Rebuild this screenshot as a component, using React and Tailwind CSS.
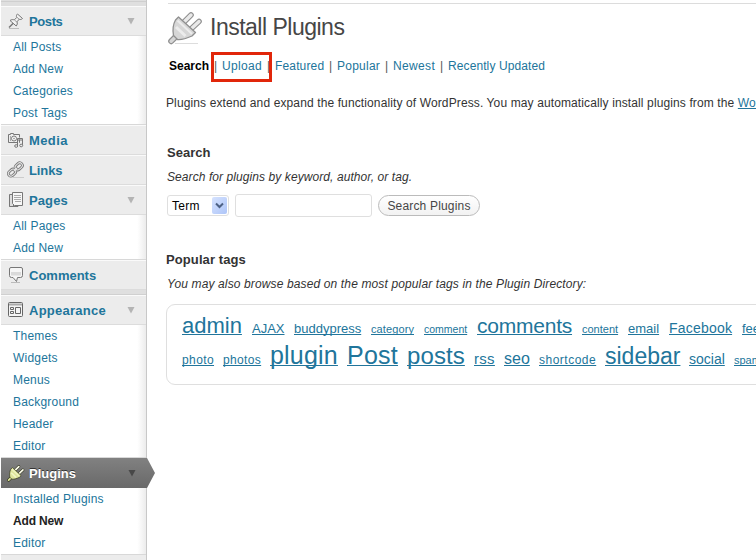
import React from 'react';

const stroke = { fill: 'none', stroke: '#777', strokeWidth: 1 };

function PinIcon() {
  return (
    <svg width="18" height="18" viewBox="0 0 18 18" {...stroke}>
      <path d="M2 16.500h10" stroke="#bdbdbd" />
      <path d="M2 15.500L6.500 11" stroke="#777" strokeWidth="1.400" />
      <path d="M3 8.500c1.500-1 3-1.100 4.300-.6L9.700 5.500c-.6-1.300-.2-2.700.8-3.500l5 4.500c-1 1.100-2.200 1.200-3.300.7L10 9.800c.6 1.400.3 3-.8 4.200z" fill="#f2f2f2" />
      <path d="M7.500 8l2.500 2.200M10 5.300l2.300 2" stroke="#999" />
    </svg>
  );
}

function MediaIcon() {
  return (
    <svg width="18" height="18" viewBox="0 0 18 18" {...stroke}>
      <path d="M1.500 3.500h2v-1h3v1h6v8h-11z" fill="#eee" />
      <circle cx="7" cy="7.500" r="2.500" fill="#fff" />
      <circle cx="7" cy="7.500" r=".6" stroke="#999" />
      <path d="M3.500 5v5" stroke="#aaa" />
      <path d="M11 15V7.500h4.500v7" stroke="#ececec" strokeWidth="2" />
      <path d="M10.500 15V7.500h5v7M10.500 9h5" />
      <ellipse cx="9.200" cy="15" rx="1.500" ry="1.300" fill="#eee" />
      <ellipse cx="14.200" cy="14.500" rx="1.500" ry="1.300" fill="#eee" />
    </svg>
  );
}

function LinkIcon() {
  return (
    <svg width="18" height="18" viewBox="0 0 18 18" fill="none">
      <path d="M6 16.500h11" stroke="#ccc" />
      <g transform="rotate(-43 8.500 8.500)" stroke="#777" strokeWidth="2.800">
        <rect x="-.2" y="5.800" width="8" height="5.200" rx="2.600" />
        <rect x="9" y="5.800" width="8" height="5.200" rx="2.600" />
        <path d="M5.500 8.500h6" />
      </g>
      <g transform="rotate(-43 8.500 8.500)" stroke="#e6e6e6" strokeWidth="1">
        <rect x="-.2" y="5.800" width="8" height="5.200" rx="2.600" />
        <rect x="9" y="5.800" width="8" height="5.200" rx="2.600" />
        <path d="M5.500 8.500h6" />
      </g>
    </svg>
  );
}

function PagesIcon() {
  return (
    <svg width="18" height="18" viewBox="0 0 18 18" {...stroke}>
      <path d="M2.500 3.500h4v12h-4z" fill="#ddd" />
      <path d="M2.500 15.500h8.500V14" />
      <path d="M5.500 1.500h10v13h-8l-2-2z" fill="#f7f7f7" />
      <path d="M7 4.500h7M7 6.500h7M7 8.500h7M8 10.500h6" stroke="#aaa" />
    </svg>
  );
}

function CommentIcon() {
  return (
    <svg width="18" height="18" viewBox="0 0 18 18" {...stroke}>
      <path d="M4 16.500h9" stroke="#bbb" />
      <path d="M4 1.500h10q1.500 0 1.500 1.500v6.500q0 2-2 2H10.500L9.500 15.500 6 11.500H4.500q-2 0-2-2V3q0-1.500 1.500-1.500z" fill="#f6f6f6" />
      <path d="M4 6h10v3.500H4z" fill="#dadada" stroke="none" />
    </svg>
  );
}

function AppearanceIcon() {
  return (
    <svg width="18" height="18" viewBox="0 0 18 18" {...stroke} stroke="#666">
      <rect x="1.500" y="1.500" width="14" height="14" rx="1" fill="#f4f4f4" />
      <path d="M2 3.500h13" strokeWidth="2" stroke="#aaa" />
      <path d="M3.500 6.500h3v2h-3zM3.500 10.500h3v2h-3zM8.500 6.500h5v6h-5z" />
    </svg>
  );
}

function PlugShape({ body, edge, prong, shade }) {
  return (
    <g>
      <path d="M3.200 31.200L8.500 26" stroke={edge} strokeWidth="6" strokeLinecap="round" />
      <path d="M3.200 31.200L8.500 26" stroke={body} strokeWidth="3.600" strokeLinecap="round" />
      <path d="M16 12L23 5M23.500 18.500L31 11.500" stroke={edge} strokeWidth="5.600" strokeLinecap="round" />
      <path d="M16 12L23 5M23.500 18.500L31 11.500" stroke={prong} strokeWidth="3.400" strokeLinecap="round" />
      <path d="M10.500 7L27.500 22.500 24 26C19.500 28 15 30 9.500 29.500L5.500 25.500C4.500 20 5 14.500 7.500 10z" fill={body} stroke={edge} strokeWidth="1.300" strokeLinejoin="round" />
      <path d="M9.500 10.500L24 24" stroke={shade} strokeWidth="2" />
      <path d="M8 17l9.500 9" stroke={shade} strokeWidth="3" />
    </g>
  );
}

function PluginMenuIcon() {
  return (
    <svg width="18" height="18" viewBox="0 0 35 35" fill="none">
      <PlugShape body="#dfe69c" edge="#33361f" prong="#fdfdec" shade="#f3f6c6" />
    </svg>
  );
}

function PluginTitleIcon() {
  return (
    <svg className="shrink-0" width="36" height="36" viewBox="0 0 36 36" fill="none">
      <path d="M7 33.500h23" stroke="#ddd" />
      <PlugShape body="#d6d6d6" edge="#8f8f8f" prong="#e9e9e9" shade="#ececec" />
    </svg>
  );
}

function Head({ icon, label, track = '', arrow }) {
  return (
    <div className="flex h-[30px] items-center border-t border-b border-t-[#fafafa] border-b-[#dcdcdc] bg-[#ececec] pl-[6px] pr-[11px]">
      {icon}
      <span className={`ml-1 flex-1 pt-[2px] text-[13px] font-bold text-[#21759b] ${track}`}>{label}</span>
      {arrow && <Arrow className="text-[#b4b4b4]" />}
    </div>
  );
}

function Arrow({ className }) {
  return (
    <svg className={className} width="8" height="8" viewBox="0 0 8 8">
      <path d="M.5 1h7L4 7.500z" fill="currentColor" />
    </svg>
  );
}

function Sub({ items, current }) {
  return (
    <ul className="bg-linear-to-r from-white from-[94%] to-[#ececec] pl-3 text-[12px] tracking-[0.2px] text-[#21759b]">
      {items.map((item) => (
        <li
          key={item}
          className={item === current ? 'h-[22px] leading-[22px] font-bold tracking-[-0.15px] text-[#222]' : 'h-[22px] leading-[22px]'}
        >
          {item}
        </li>
      ))}
    </ul>
  );
}

function Divider() {
  return <div className="h-[5px] border-b border-[#d0d0d0] bg-[#dfdfdf]" />;
}

function Rule() {
  return <div className="h-px bg-[#d8d8d8]" />;
}

function Sidebar() {
  return (
    <nav className="ml-px w-[146px] shrink-0 border-r border-[#c8c8c8]">
      <div className="h-[6px] bg-[#dfdfdf]">
        <div className="h-[2px] border-b border-[#cfcfcf]" />
      </div>
      <Head icon={<PinIcon />} label="Posts" track="tracking-[-0.4px]" arrow />
      <Sub items={['All Posts', 'Add New', 'Categories', 'Post Tags']} />
      <Rule />
      <Head icon={<MediaIcon />} label="Media" track="tracking-[0.4px]" />
      <Head icon={<LinkIcon />} label="Links" track="tracking-[-0.1px]" />
      <Head icon={<PagesIcon />} label="Pages" track="tracking-[0.1px]" arrow />
      <Sub items={['All Pages', 'Add New']} />
      <Rule />
      <Head icon={<CommentIcon />} label="Comments" />
      <Divider />
      <Head icon={<AppearanceIcon />} label="Appearance" track="tracking-[0.25px]" arrow />
      <Sub items={['Themes', 'Widgets', 'Menus', 'Background', 'Header', 'Editor']} />
      <Rule />
      <div className="relative flex h-[30px] items-center bg-linear-to-b from-[#818181] to-[#696969] pl-[6px] pr-[10px]">
        <PluginMenuIcon />
        <span className="ml-1 flex-1 pt-[2px] text-[13px] font-bold text-white [text-shadow:0_-1px_0_#333]">Plugins</span>
        <Arrow className="text-[#484848]" />
        <svg className="absolute top-0 left-[145px]" width="9" height="30" viewBox="0 0 9 30">
          <defs>
            <linearGradient id="tip" x1="0" y1="0" x2="0" y2="1">
              <stop offset="0" stopColor="#818181" />
              <stop offset="1" stopColor="#696969" />
            </linearGradient>
          </defs>
          <path d="M0 0h1l8 15-8 15H0z" fill="url(#tip)" />
        </svg>
      </div>
      <Sub items={['Installed Plugins', 'Add New', 'Editor']} current="Add New" />
      <Rule />
      <div className="h-[5px] bg-[#ececec]" />
    </nav>
  );
}

const tagRows = [
  {
    row: 'gap-x-[10px] h-[29px]',
    tags: [
      ['admin', 'w-[60px] text-[22px]'],
      ['AJAX', 'w-[32px] text-[13px]'],
      ['buddypress', 'w-[67px] text-[13px]'],
      ['category', 'w-[43px] text-[11px] tracking-[0.1px]'],
      ['comment', 'w-[43px] text-[10.5px]'],
      ['comments', 'w-[95px] text-[21px] tracking-[-0.23px]'],
      ['content', 'w-[36px] text-[11px]'],
      ['email', 'w-[31px] text-[13px]'],
      ['Facebook', 'w-[63px] text-[14px] tracking-[0.2px]'],
      ['feed', 'w-[30px] text-[13px]'],
    ],
  },
  {
    row: 'gap-x-[9px] h-[31px]',
    tags: [
      ['photo', 'w-[32px] text-[12px] tracking-[0.4px]'],
      ['photos', 'w-[38px] text-[12px] tracking-[0.35px]'],
      ['plugin', 'w-[68px] text-[25px] tracking-[0.2px]'],
      ['Post', 'w-[51px] text-[25px] tracking-[0.25px]'],
      ['posts', 'w-[58px] text-[24px] tracking-[0.1px]'],
      ['rss', 'w-[21px] text-[15px] tracking-[0.3px]'],
      ['seo', 'w-[26px] text-[16px]'],
      ['shortcode', 'w-[57px] text-[12px] tracking-[0.5px]'],
      ['sidebar', 'w-[75px] text-[23px]'],
      ['social', 'w-[36px] text-[14px]'],
      ['spam', 'w-[30px] text-[11px]'],
    ],
  },
];

const navLinks = [
  ['Upload', 'w-[46px] tracking-[0.35px]'],
  ['Featured', 'w-[55px] tracking-[0.15px]'],
  ['Popular', 'w-[49px] tracking-[0.25px]'],
  ['Newest', 'w-[48px] tracking-[0.35px]'],
  ['Recently Updated', 'w-[110px] tracking-[0.1px]'],
];

export default function App() {
  return (
    <div className="flex h-[560px] w-[756px] overflow-hidden bg-white font-['Liberation_Sans',Arial,sans-serif] text-[12px] text-[#333]">
      <Sidebar />
      <main className="min-w-0 flex-1 pt-[3px] pl-[19px] whitespace-nowrap">
        <div className="ml-[2px] h-px bg-[#dcdcdc]" />
        <header className="mt-[6px] flex h-[36px] items-center pl-[2px]">
          <PluginTitleIcon />
          <h1 className="-mt-[2px] ml-[6px] text-[23px] leading-[34px] tracking-[-0.5px] text-[#464646]">Install Plugins</h1>
        </header>
        <div className="relative mt-[10px] flex h-5 items-center pl-[3px] text-[#21759b]">
          <b className="w-[45px] text-black">Search</b>
          {navLinks.map(([label, cls]) => (
            <React.Fragment key={label}>
              <span className="w-2 text-[#555]">|</span>
              <a className={`-mr-px ${cls}`}>{label}</a>
            </React.Fragment>
          ))}
          <div className="absolute top-[-4px] left-[45px] h-[30px] w-[61px] border-[3px] border-[#e1260a]" />
        </div>
        <p className="mt-[17px] h-5 leading-5 tracking-[0.118px]">
          Plugins extend and expand the functionality of WordPress. You may automatically install plugins from the{' '}
          <a className="text-[#21759b] underline">WordPress Plugin Directory</a>
        </p>
        <h2 className="mt-[30px] pl-px text-[13px] leading-5 font-bold">Search</h2>
        <p className="mt-[4px] pl-px leading-5 tracking-[0.08px] italic">Search for plugins by keyword, author, or tag.</p>
        <form className="mt-[7px] flex h-[23px] items-center pl-px">
          <div className="flex h-[21px] w-[62px] items-center justify-between rounded-[3px] border border-[#dfdfdf] pr-px pl-1 tracking-[0.3px] text-black">
            Term
            <span className="flex h-[17px] w-[15px] items-center justify-center rounded-[2px] bg-linear-to-br from-[#d5e2fe] to-[#aec5f8]">
              <svg width="9" height="7" viewBox="0 0 9 7">
                <path d="M1 1.500l3.500 3.500L8 1.500" fill="none" stroke="#4d6185" strokeWidth="2" />
              </svg>
            </span>
          </div>
          <input className="ml-[6px] h-[23px] w-[137px] rounded-[3px] border border-[#dfdfdf]" />
          <button
            type="button"
            className="ml-[6px] h-[21px] w-[102px] rounded-full border border-[#bbb] bg-linear-to-b from-white to-[#f2f2f2] pt-px leading-[18px] tracking-[0.18px] text-[#464646]"
          >
            Search Plugins
          </button>
        </form>
        <h2 className="mt-[33px] text-[13px] leading-5 font-bold tracking-[0.1px]">Popular tags</h2>
        <p className="mt-[4px] pl-px leading-5 tracking-[0.13px] italic">
          You may also browse based on the most popular tags in the Plugin Directory:
        </p>
        <div className="mt-[10px] h-[81px] w-[640px] rounded-[9px] border border-[#dfdfdf] pt-[6px] pl-[15px]">
          {tagRows.map(({ row, tags }) => (
            <div key={row} className={`flex items-baseline leading-[30px] ${row}`}>
              {tags.map(([tag, cls]) => (
                <a
                  key={tag}
                  className={`shrink-0 text-[#21759b] underline decoration-1 underline-offset-1 [text-decoration-skip-ink:none] ${cls}`}
                >
                  {tag}
                </a>
              ))}
            </div>
          ))}
        </div>
      </main>
    </div>
  );
}
